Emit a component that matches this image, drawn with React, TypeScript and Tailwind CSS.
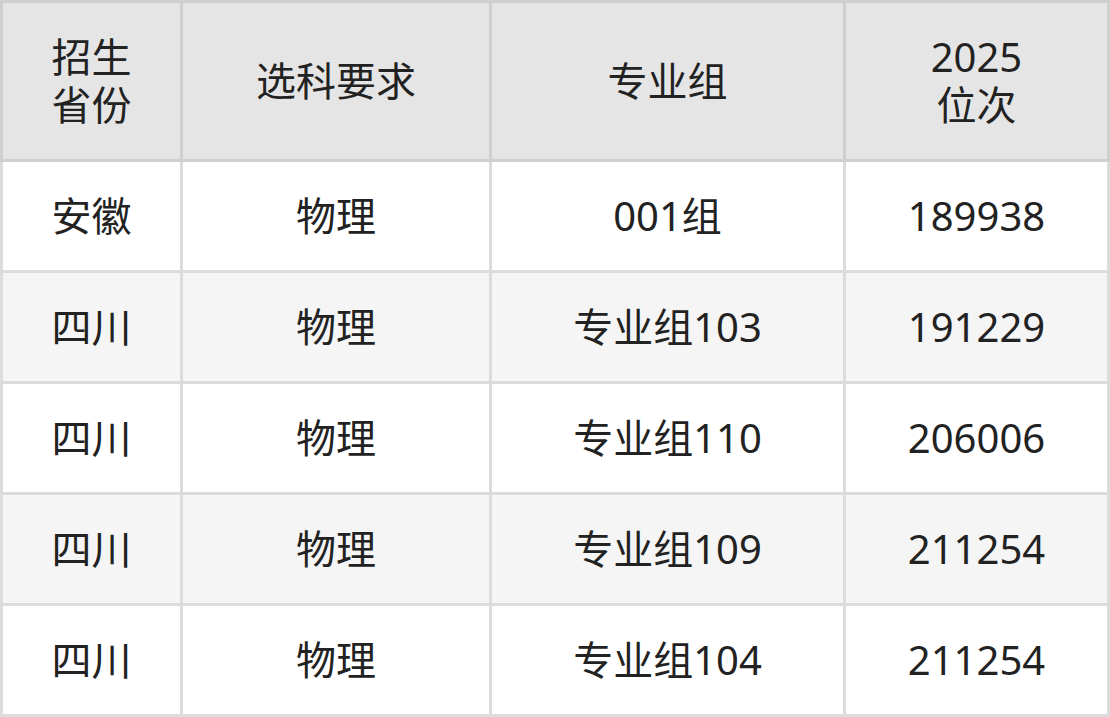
import React from 'react';

const rows = [
    { prov: '安徽', req: '物理', group: '001组', rank: '189938' },
    { prov: '四川', req: '物理', group: '专业组103', rank: '191229' },
    { prov: '四川', req: '物理', group: '专业组110', rank: '206006' },
    { prov: '四川', req: '物理', group: '专业组109', rank: '211254' },
    { prov: '四川', req: '物理', group: '专业组104', rank: '211254' },
];

const cols = 'grid grid-cols-[177px_306px_351px_261px] gap-[3px]';

export default function App() {
    return (
        <div
            className="w-[1110px] h-[717px] bg-white text-[40px] leading-[1.2] text-[#222]"
            style={{ fontFamily: '"Noto Sans", "Noto Sans CJK SC", sans-serif' }}
        >
            <div className={`${cols} bg-[#cfcfcf] p-[3px]`}>
                <div className="h-[156px] bg-[#e5e5e5] flex items-center justify-center text-center">
                    招生<br />省份
                </div>
                <div className="h-[156px] bg-[#e5e5e5] flex items-center justify-center">选科要求</div>
                <div className="h-[156px] bg-[#e5e5e5] flex items-center justify-center">专业组</div>
                <div className="h-[156px] bg-[#e5e5e5] flex items-center justify-center text-center">
                    2025<br />位次
                </div>
            </div>
            <div className={`${cols} bg-[#dcdcdc] px-[3px] pb-[3px]`}>
                {rows.map((r, i) => {
                    const bg = i % 2 === 1 ? 'bg-[#f5f5f5]' : 'bg-white';
                    return (
                        <React.Fragment key={i}>
                            <div className={`h-[108px] ${bg} flex items-center justify-center`}>{r.prov}</div>
                            <div className={`h-[108px] ${bg} flex items-center justify-center`}>{r.req}</div>
                            <div className={`h-[108px] ${bg} flex items-center justify-center`}>{r.group}</div>
                            <div className={`h-[108px] ${bg} flex items-center justify-center`}>{r.rank}</div>
                        </React.Fragment>
                    );
                })}
            </div>
        </div>
    );
}
